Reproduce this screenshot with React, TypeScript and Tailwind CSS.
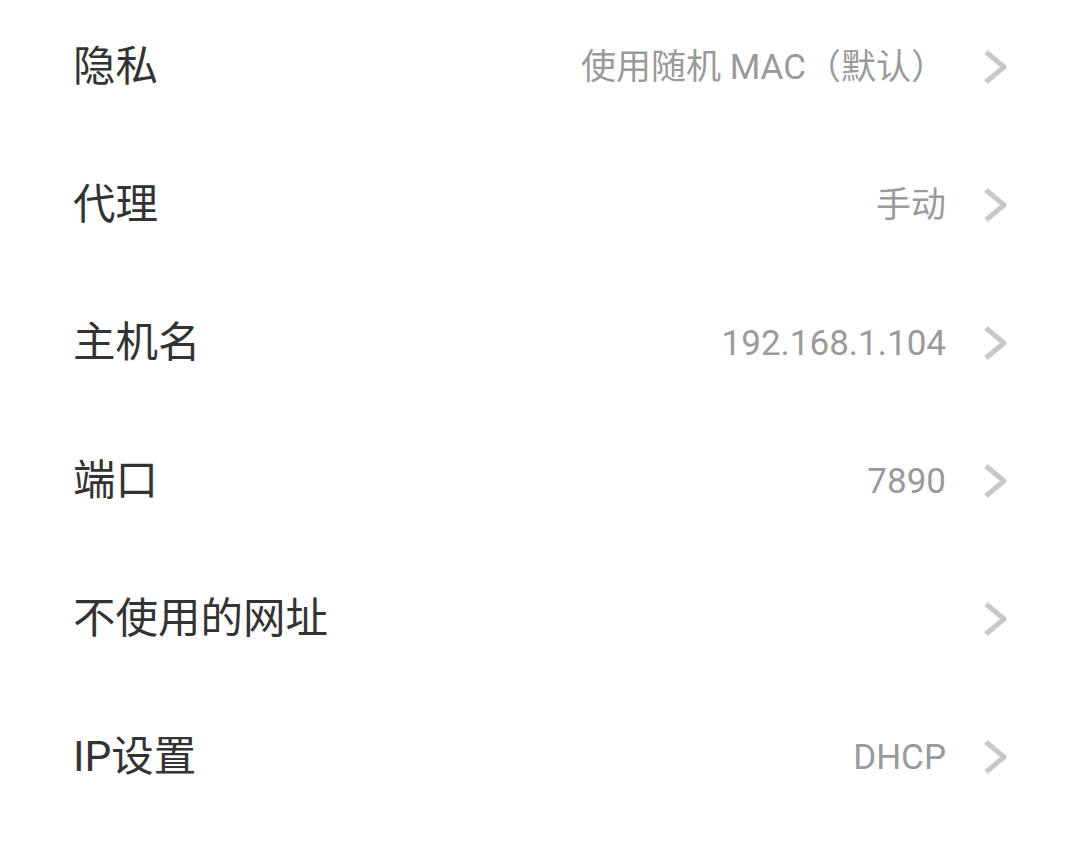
import React from 'react';

const rows = [
  { label: '隐私', value: '使用随机 MAC（默认）' },
  { label: '代理', value: '手动' },
  { label: '主机名', value: '192.168.1.104' },
  { label: '端口', value: '7890' },
  { label: '不使用的网址', value: '' },
  { label: 'IP设置', value: 'DHCP' },
];

function Chevron() {
  return (
    <svg width="24" height="36" viewBox="0 0 24 36" className="shrink-0">
      <polyline points="3,3 21,18 3,33" fill="none" stroke="#c8c8c8" strokeWidth="5" strokeLinejoin="round" />
    </svg>
  );
}

export default function App() {
  return (
    <div
      className="w-[1080px] h-[851px] bg-white overflow-hidden"
      style={{ fontFamily: "Roboto, 'Noto Sans CJK SC', sans-serif" }}
    >
      <div className="-mt-[2px] px-[73px]">
        {rows.map(row => (
          <div key={row.label} className="flex items-center h-[138px]">
            <span className="text-[42.5px] text-[#333333] leading-none">{row.label}</span>
            <span className="ml-auto text-[35px] text-[#9a9a9a] leading-none">{row.value}</span>
            <span className="ml-[37px]">
              <Chevron />
            </span>
          </div>
        ))}
      </div>
    </div>
  );
}
